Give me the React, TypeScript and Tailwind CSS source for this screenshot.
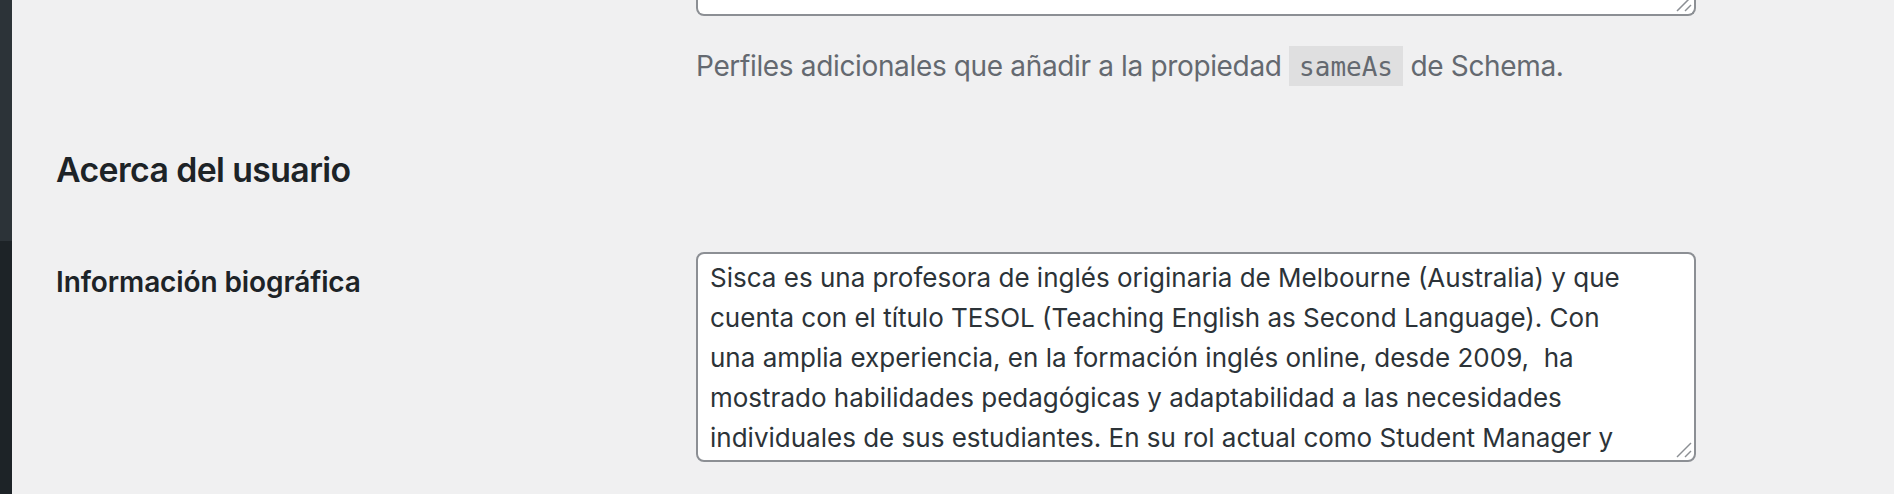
import React from 'react'

const bioLines = [
  'Sisca es una profesora de inglés originaria de Melbourne (Australia) y que',
  'cuenta con el título TESOL (Teaching English as Second Language). Con',
  'una amplia experiencia, en la formación inglés online, desde 2009,  ha',
  'mostrado habilidades pedagógicas y adaptabilidad a las necesidades',
  'individuales de sus estudiantes. En su rol actual como Student Manager y',
]

// little grip drawn in the bottom-right corner of a textarea
const ResizeGrip = () => (
  <svg
    className="absolute right-[1px] bottom-[1px]"
    width="18"
    height="18"
    viewBox="0 0 18 18"
    fill="none"
    stroke="#8c8f94"
    strokeWidth="1.5"
  >
    <line x1="2" y1="16" x2="16" y2="2" />
    <line x1="10" y1="16" x2="16" y2="10" />
  </svg>
)

export default function App() {
  return (
    <div className="flex h-[494px] w-full overflow-hidden bg-[#f0f0f1] font-['Inter',sans-serif]">
      {/* admin menu edge */}
      <div className="flex w-[12px] shrink-0 flex-col">
        <div className="h-[241px] bg-[#2c3338]" />
        <div className="flex-1 bg-[#1d2327]" />
      </div>

      <div className="flex-1 pl-[44px]">
        {/* sameAs field (scrolled, only its end shows) */}
        <div className="flex">
          <div className="w-[640px] shrink-0" />
          <div className="w-[1000px]">
            <div className="relative h-[16px] rounded-b-[8px] border-2 border-t-0 border-[#8c8f94] bg-white">
              <ResizeGrip />
            </div>
            <p className="mt-[29px] text-[28px] leading-[42px] tracking-[-0.35px] text-[#646970]">
              Perfiles adicionales que añadir a la propiedad{' '}
              <code className="bg-[#dfdfe0] px-[10px] pt-[6px] pb-[4px] font-['DejaVu_Sans_Mono',monospace] text-[26px] tracking-normal">
                sameAs
              </code>{' '}
              de Schema.
            </p>
          </div>
        </div>

        <h2 className="mt-[58px] text-[33.8px] leading-[47px] font-semibold tracking-[-0.6px] text-[#1d2327]">
          Acerca del usuario
        </h2>

        <div className="mt-[59px] flex">
          <div className="w-[640px] shrink-0 pt-[12px]">
            <label className="text-[28px] leading-[36px] font-semibold tracking-[-0.1px] text-[#1d2327]">
              Información biográfica
            </label>
          </div>
          <div className="relative h-[210px] w-[1000px] overflow-hidden rounded-[8px] border-2 border-[#8c8f94] bg-white px-[12px] pt-[4px]">
            {bioLines.map((line, i) => (
              <div key={i} className="whitespace-pre text-[26px] leading-[40px] text-[#2c3338]">
                {line}
              </div>
            ))}
            <ResizeGrip />
          </div>
        </div>
      </div>
    </div>
  )
}
